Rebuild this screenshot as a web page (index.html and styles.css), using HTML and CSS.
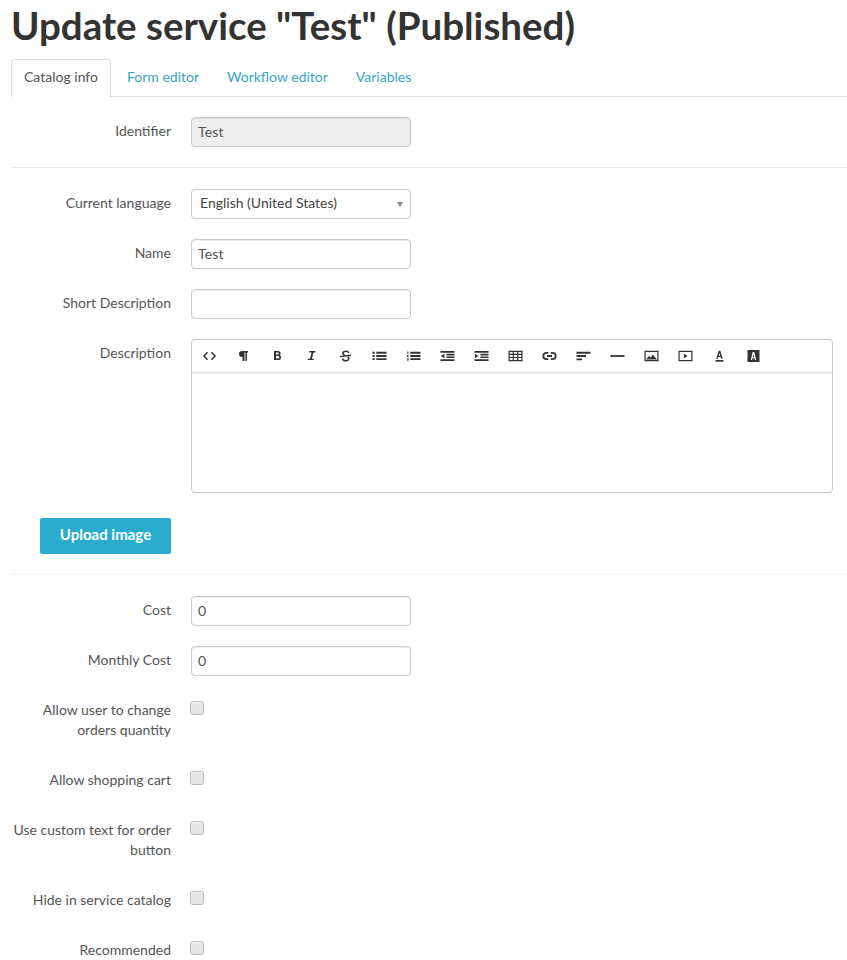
FILE: index.html
```html
<!DOCTYPE html>
<html lang="en">
<head>
<meta charset="utf-8">
<title>Update service</title>
<link rel="stylesheet" href="styles.css">
</head>
<body>
<h1 class="title">Update service "Test" (Published)</h1>
<ul class="tabs">
  <li class="tab active">Catalog info</li>
  <li class="tab">Form editor</li>
  <li class="tab">Workflow editor</li>
  <li class="tab">Variables</li>
</ul>
<form class="form">
  <div class="row"><label class="lbl">Identifier</label><div class="input disabled">Test</div></div>
  <hr class="sep sep-a">
  <div class="row"><label class="lbl">Current language</label><div class="input select">English (United States)<span class="caret"></span></div></div>
  <div class="row"><label class="lbl">Name</label><div class="input">Test</div></div>
  <div class="row"><label class="lbl">Short Description</label><div class="input"></div></div>
  <div class="row"><label class="lbl">Description</label>
    <div class="editor">
      <div class="toolbar">
        <svg class="ic" viewBox="0 0 14 14"><path d="M5 3.300 1.500 7 5 10.700M9 3.300 12.500 7 9 10.700" fill="none" stroke="#333" stroke-width="1.500"/></svg>
        <svg class="ic" viewBox="0 0 14 14"><path d="M6 2h5.500v1.500h-1V12H9V3.500H8V12H6V8H5.500A3 3 0 0 1 5.500 2Z" fill="#333"/></svg>
        <svg class="ic" viewBox="0 0 14 14"><path d="M3.500 2h4.300a2.400 2.400 0 0 1 1.600 4.200A2.600 2.600 0 0 1 8 11H3.500ZM5.500 3.600v1.900h1.800a.95.95 0 0 0 0-1.900ZM5.500 7v2.400h2.100a1.200 1.200 0 0 0 0-2.400Z" fill="#333" fill-rule="evenodd"/></svg>
        <svg class="ic" viewBox="0 0 14 14"><path d="M4.800 2h6v1.400H9L7.400 9.700h1.800V11H3.200V9.700h2.300L7.100 3.400H4.800Z" fill="#333"/></svg>
        <svg class="ic" viewBox="0 0 14 14"><path d="M10.300 4C10 2.700 8.900 2.200 7.400 2.200 5.700 2.200 4.400 3 4.400 4.500c0 1.300 1 1.800 2.700 2.200M1.500 7.500 12.500 6.300M9.200 7.700c.7.500 1 1 1 1.700 0 1.500-1.300 2.300-3 2.300-1.700 0-3-.7-3.300-2.200" fill="none" stroke="#333" stroke-width="1.500"/></svg>
        <svg class="ic" viewBox="0 0 14 14"><path d="M0 2.800h2.200v1.900H0ZM3.800 2.800H14v1.900H3.800ZM0 6h2.200v1.900H0ZM3.800 6H14v1.900H3.800ZM0 9.200h2.200v1.900H0ZM3.800 9.200H14v1.900H3.800Z" fill="#333"/></svg>
        <svg class="ic" viewBox="0 0 14 14"><path d="M.8 2.600h1.100v2.200H.8ZM.4 6h1.800v.7H1.200v.5h1v.7H.4ZM.4 9.200h1.800v2.200H.4v-.6h1.100v-.2H.8v-.5h.7v-.1H.4ZM3.800 2.800H14v1.900H3.800ZM3.800 6H14v1.900H3.800ZM3.800 9.200H14v1.900H3.800Z" fill="#333"/></svg>
        <svg class="ic" viewBox="0 0 14 14"><path d="M0 2h14v1.700H0ZM6 4.700h8v1.700H6ZM6 7.400h8v1.700H6ZM0 10.300h14V12H0ZM4 4.700v4.600L.4 7Z" fill="#333"/></svg>
        <svg class="ic" viewBox="0 0 14 14"><path d="M0 2h14v1.700H0ZM6 4.700h8v1.700H6ZM6 7.400h8v1.700H6ZM0 10.300h14V12H0ZM.4 4.700v4.600L4 7Z" fill="#333"/></svg>
        <svg class="ic" viewBox="0 0 14 14"><path d="M.6 2.400h12.800v9.200H.6ZM.6 5.400h12.800M.6 8.500h12.800M4.800 2.400v9.200M9.200 2.400v9.200" fill="none" stroke="#333" stroke-width="1.200"/></svg>
        <svg class="ic" viewBox="0 0 14 14"><path d="M5.800 3.800H4a3.200 3.200 0 0 0 0 6.400h1.800M8.200 3.800H10a3.200 3.200 0 0 1 0 6.400H8.200M4.500 7h5" fill="none" stroke="#333" stroke-width="1.800"/></svg>
        <svg class="ic" viewBox="0 0 14 14"><path d="M0 2.800h14v1.900H0ZM0 6h9.500v1.900H0ZM0 9.400h5.500v1.900H0Z" fill="#333"/></svg>
        <svg class="ic" viewBox="0 0 14 14"><path d="M0 6.100h14v1.800H0Z" fill="#333"/></svg>
        <svg class="ic" viewBox="0 0 14 14"><path d="M.6 2.400h12.800v9.200H.6Z" fill="none" stroke="#333" stroke-width="1.200"/><path d="M1.500 10.600 4.500 7 6.300 8.500 8.300 5.500 12.500 10.600Z" fill="#333"/></svg>
        <svg class="ic" viewBox="0 0 14 14"><path d="M.6 2.400h12.800v9.200H.6Z" fill="none" stroke="#333" stroke-width="1.200"/><path d="M5.500 4.800 9 7 5.500 9.200Z" fill="#333"/></svg>
        <svg class="ic" viewBox="0 0 14 14"><path d="M3.800 9.700 6.200 1.800h1.600L10.200 9.700H8.700L8.200 8H5.800L5.300 9.700ZM6.200 6.800h1.600L7 4Z" fill="#333"/><path d="M3 11h8v1.700H3Z" fill="#333"/></svg>
        <svg class="ic" viewBox="0 0 14 14"><path d="M1 1h12v12H1ZM4.300 11 6.200 3h1.600l1.900 8H8.300L8 9.300H6L5.700 11ZM6.300 8.100h1.400L7 5.200Z" fill="#333" fill-rule="evenodd"/></svg>
      </div>
      <div class="editor-body"></div>
    </div>
  </div>
  <div class="row row-upload"><button type="button" class="upload">Upload image</button></div>
  <hr class="sep sep-b">
  <div class="row"><label class="lbl">Cost</label><div class="input">0</div></div>
  <div class="row"><label class="lbl">Monthly Cost</label><div class="input">0</div></div>
  <div class="row"><label class="lbl">Allow user to change orders quantity</label><span class="check"></span></div>
  <div class="row"><label class="lbl">Allow shopping cart</label><span class="check"></span></div>
  <div class="row"><label class="lbl">Use custom text for order button</label><span class="check"></span></div>
  <div class="row"><label class="lbl">Hide in service catalog</label><span class="check"></span></div>
  <div class="row"><label class="lbl">Recommended</label><span class="check"></span></div>
</form>
</body>
</html>
```
FILE: styles.css
```css
html, body { margin: 0; padding: 0; background: #fff; overflow: hidden; }
body { height: 960px; padding-left: 11px; font-family: Lato, sans-serif; font-size: 14px; line-height: 20px; color: #555; box-sizing: border-box; }
.title { margin: 0; height: 59px; font-size: 38.5px; line-height: 51px; font-weight: 700; color: #333; white-space: nowrap; }
.tabs { list-style: none; margin: 0; padding: 0; display: flex; height: 38px; border-bottom: 1px solid #ddd; box-sizing: border-box; }
.tab { padding: 7px 13px 0 13px; height: 37px; box-sizing: border-box; color: #35a7c6; border: 1px solid transparent; border-bottom: 0; }
.tab.active { background: #fff; color: #555; border-color: #ddd; border-radius: 4px 4px 0 0; padding: 7px 12px 0; height: 38px; margin-right: 2px; }
.form { padding-top: 20px; }
.row { display: flex; margin-bottom: 20px; align-items: flex-start; }
.lbl { width: 160px; flex: none; margin-right: 20px; padding: 4px 0 6px; text-align: right; color: #555; box-sizing: border-box; }
.input { width: 220px; height: 30px; box-sizing: border-box; border: 1px solid #ccc; border-radius: 4px; padding: 4px 6px; color: #555; background: #fff; box-shadow: inset 0 1px 1px rgba(0,0,0,.075); position: relative; letter-spacing: .2px; }
.input.disabled { background: #eee; }
.input.select { padding: 3px 6px 3px 8px; color: #444; box-shadow: none; letter-spacing: 0; }
.caret { position: absolute; right: 7px; top: 12px; border: 4px solid transparent; border-top: 5px solid #888; border-bottom: 0; border-left-width: 3px; border-right-width: 3px; }
.sep { border: 0; border-top: 1px solid #eee; margin: 0 0 21px; height: 0; }
.editor { width: 642px; height: 154px; box-sizing: border-box; border: 1px solid #ccc; border-radius: 4px; display: flex; flex-direction: column; }
.toolbar { height: 33px; box-sizing: border-box; flex: none; border-bottom: 1px solid #ddd; display: flex; align-items: center; gap: 19px; padding-left: 10px; box-shadow: 0 1px 1px rgba(0,0,0,.05); }
.ic { width: 15px; height: 14px; flex: none; display: block; }
.editor-body { flex: 1; }
.row-upload { margin: 25px 0 20px 29px; }
.upload { width: 131px; height: 36px; background: #29acce; color: #fff; font: 700 15px/20px Lato, sans-serif; border: 0; border-radius: 2px; padding: 0 0 4px; }
.check { width: 14px; height: 14px; flex: none; margin: 5px 0 0 -1px; box-sizing: border-box; border: 1px solid #bbb; border-radius: 3px; background: #e6e6e6; box-shadow: inset 0 1px 1px rgba(255,255,255,.6); }
```
